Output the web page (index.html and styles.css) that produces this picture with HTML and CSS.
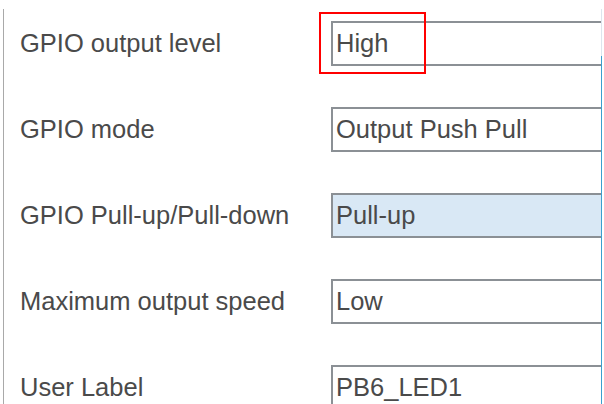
FILE: index.html
```html
<!DOCTYPE html>
<html lang="en">
<head>
    <meta charset="UTF-8">
    <meta name="viewport" content="width=device-width, initial-scale=1.0">
    <title>GPIO configuration</title>
    <link rel="stylesheet" href="styles.css">
</head>
<body>
    <div class="panel">
        <div class="scroll-mark"></div>

        <div class="rows">
            <div class="row">
                <div class="label">GPIO output level</div>
                <div class="field">
                    <div class="value">High</div>
                    <div class="highlight"></div>
                </div>
            </div>

            <div class="row">
                <div class="label">GPIO mode</div>
                <div class="field">
                    <div class="value">Output Push Pull</div>
                </div>
            </div>

            <div class="row">
                <div class="label">GPIO Pull-up/Pull-down</div>
                <div class="field">
                    <div class="value selected">Pull-up</div>
                </div>
            </div>

            <div class="row">
                <div class="label">Maximum output speed</div>
                <div class="field">
                    <div class="value">Low</div>
                </div>
            </div>

            <div class="row">
                <div class="label">User Label</div>
                <div class="field">
                    <div class="value">PB6_LED1</div>
                </div>
            </div>
        </div>
    </div>
</body>
</html>
```

FILE: styles.css
```css
html, body {
    margin: 0;
    height: 100%;
    overflow: hidden;
    background: #ffffff;
}
body {
    font-family: "Liberation Sans", Arial, sans-serif;
    font-size: 25.5px;
    color: #4a4a4a;
}
.panel {
    position: relative;
    margin: 9px 0 0 3px;
    width: 599px;
    height: 395px;
    border-left: 1px solid #a9a9a9;
    border-right: 1px solid #dde5ed;
    box-sizing: border-box;
}
.scroll-mark {
    position: absolute;
    right: -1px;
    top: 47px;
    bottom: 0;
    width: 1px;
    background: #3a9fd0;
}
.rows {
    height: 100%;
    overflow: hidden;
    padding: 12px 0 0 16px;
    box-sizing: border-box;
    display: flex;
    flex-direction: column;
    gap: 41px;
}
.row {
    display: grid;
    grid-template-columns: 311px 1fr;
    align-items: center;
    flex-shrink: 0;
}
.label {
    white-space: nowrap;
}
.field {
    position: relative;
}
.value {
    height: 45px;
    display: flex;
    align-items: center;
    padding-left: 3px;
    border: 2px solid #8b9095;
    border-right: 0;
    box-sizing: border-box;
    background: #ffffff;
    white-space: nowrap;
}
.value.selected {
    background: #d9e8f5;
}
.highlight {
    position: absolute;
    left: -12px;
    top: -9px;
    width: 107px;
    height: 62px;
    border: 2px solid #ff0000;
    box-sizing: border-box;
}
```
